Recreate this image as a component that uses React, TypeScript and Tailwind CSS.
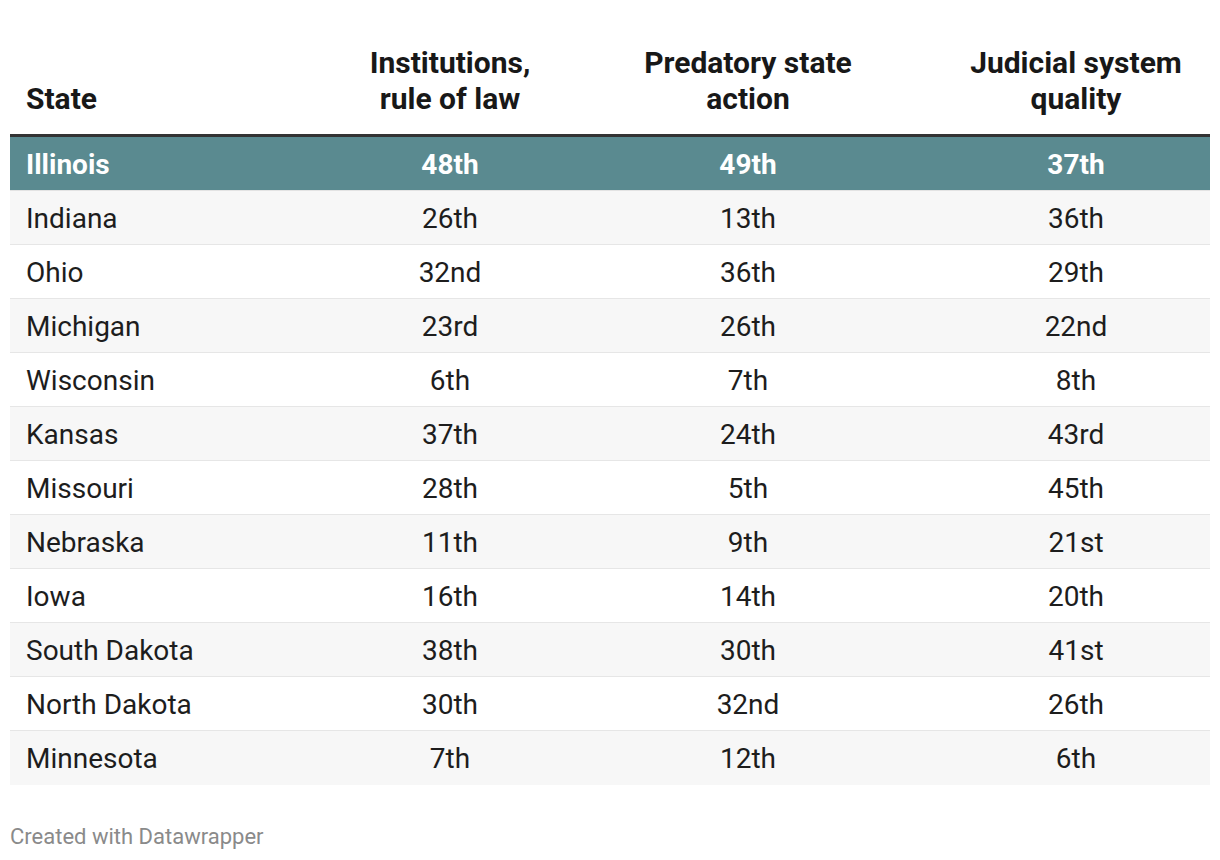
const rows: [string, string, string, string][] = [
  ['Indiana', '26th', '13th', '36th'],
  ['Ohio', '32nd', '36th', '29th'],
  ['Michigan', '23rd', '26th', '22nd'],
  ['Wisconsin', '6th', '7th', '8th'],
  ['Kansas', '37th', '24th', '43rd'],
  ['Missouri', '28th', '5th', '45th'],
  ['Nebraska', '11th', '9th', '21st'],
  ['Iowa', '16th', '14th', '20th'],
  ['South Dakota', '38th', '30th', '41st'],
  ['North Dakota', '30th', '32nd', '26th'],
  ['Minnesota', '7th', '12th', '6th'],
];

const cols = 'grid grid-cols-[336px_208px_388px_268px]';

export default function App() {
  return (
    <div className="w-[1220px] h-[860px] bg-white px-[10px] pt-[45px] font-['Roboto',sans-serif] text-[#1d1d1d]">
      <div className={`${cols} items-end pb-[17px] border-b-[3px] border-[#333333] text-[30px] leading-[36px] font-bold text-[#181818]`}>
        <div className="pl-[16px]">State</div>
        <div className="text-center">Institutions,<br />rule of law</div>
        <div className="text-center">Predatory state<br />action</div>
        <div className="text-center">Judicial system<br />quality</div>
      </div>
      <div className={`${cols} h-[54px] items-center pt-[2px] bg-[#5a8a90] border-b border-[#e3e3e3] text-white font-bold text-[28px]`}>
        <div className="pl-[16px]">Illinois</div>
        <div className="text-center">48th</div>
        <div className="text-center">49th</div>
        <div className="text-center">37th</div>
      </div>
      {rows.map((r, i) => (
        <div
          key={r[0]}
          className={`${cols} h-[54px] items-center pt-[2px] text-[28px] ${i % 2 === 0 ? 'bg-[#f7f7f7]' : 'bg-white'} ${i === rows.length - 1 ? 'border-b-0' : 'border-b border-[#e6e6e6]'}`}
        >
          <div className="pl-[16px]">{r[0]}</div>
          <div className="text-center">{r[1]}</div>
          <div className="text-center">{r[2]}</div>
          <div className="text-center">{r[3]}</div>
        </div>
      ))}
      <div className="mt-[35px] text-[22px] text-[#8a8a8a]">Created with Datawrapper</div>
    </div>
  );
}
